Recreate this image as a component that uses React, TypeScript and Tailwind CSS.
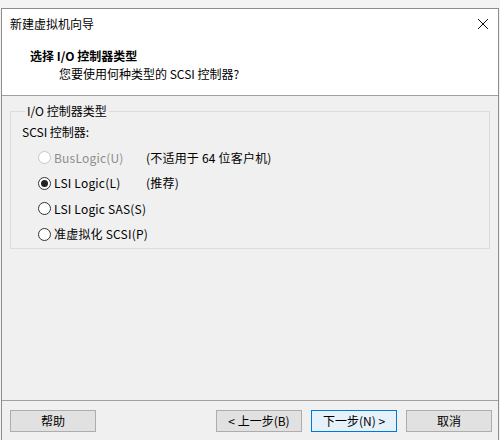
import React from "react";

const FONT = { fontFamily: '"Noto Sans CJK SC", "Noto Sans", sans-serif' };

type RadioProps = {
  label: string;
  checked?: boolean;
  disabled?: boolean;
  note?: string;
};

function Radio({ label, checked, disabled, note }: RadioProps) {
  return (
    <div className="flex h-[25.5px] items-center whitespace-nowrap">
      <div className="flex min-w-[108px] items-center gap-[3px]">
        <span
          className={
            "flex h-[13px] w-[13px] shrink-0 items-center justify-center rounded-full border bg-white " +
            (disabled ? "border-[#c6c6c6] bg-[#f7f7f7]" : "border-[#333333]")
          }
        >
          {checked && <span className="h-[7px] w-[7px] rounded-full bg-[#222222]" />}
        </span>
        <span className={"tracking-[0.2px] " + (disabled ? "text-[#8d8d8d]" : "text-black")}>{label}</span>
      </div>
      {note && <span className="tracking-[0.2px] text-black">{note}</span>}
    </div>
  );
}

function Button({ label, primary }: { label: string; primary?: boolean }) {
  return (
    <button
      className={
        "flex h-[22px] w-[86px] items-center justify-center border text-[12px] text-black " +
        (primary ? "border-[#0078d7] bg-[#e5f1fb]" : "border-[#adadad] bg-[#e1e1e1]")
      }
    >
      {label}
    </button>
  );
}

export default function App() {
  return (
    <div className="h-[440px] w-[500px] overflow-hidden bg-[#f3f3f3] pt-[8px] text-[12px] leading-[16px]" style={FONT}>
      <div className="ml-[1px] flex h-[432px] w-[498px] flex-col border-x border-t border-[#8c8c8c] bg-[#f0f0f0]">
        {/* title + header */}
        <div className="flex h-[87px] flex-col border-b border-[#a0a0a0] bg-white">
          <div className="flex h-[28px] items-center justify-between pl-[8px] pr-[8px] pt-[1px]">
            <span className="text-black">新建虚拟机向导</span>
            <svg width="12" height="12" viewBox="0 0 12 12" className="mr-[1px]">
              <path d="M1 1 L11 11 M11 1 L1 11" stroke="#111" strokeWidth="1" fill="none" />
            </svg>
          </div>
          <div className="pl-[28px] pt-[11px] font-bold text-black">选择 I/O 控制器类型</div>
          <div className="pl-[57px] pt-[2px] text-black">您要使用何种类型的 SCSI 控制器?</div>
        </div>

        {/* body */}
        <div className="flex-1 px-[8px] pt-[7px]">
          <fieldset className="h-[146px] border border-[#dcdcdc] px-[10px] pt-[5px]">
            <legend className="ml-[4px] px-[2px] text-black">I/O 控制器类型</legend>
            <div className="pl-[1px] text-black">SCSI 控制器:</div>
            <div className="pl-[17px] pt-[5px]">
              <Radio label="BusLogic(U)" disabled note="(不适用于 64 位客户机)" />
              <Radio label="LSI Logic(L)" checked note="(推荐)" />
              <Radio label="LSI Logic SAS(S)" />
              <Radio label="准虚拟化 SCSI(P)" />
            </div>
          </fieldset>
        </div>

        {/* footer */}
        <div className="flex h-[40px] items-start border-t border-[#a0a0a0] pl-[8px] pr-[6px] pt-[9px]">
          <Button label="帮助" />
          <div className="flex-1" />
          <div className="flex gap-[9px]">
            <Button label="< 上一步(B)" />
            <Button label="下一步(N) >" primary />
            <Button label="取消" />
          </div>
        </div>
      </div>
    </div>
  );
}
